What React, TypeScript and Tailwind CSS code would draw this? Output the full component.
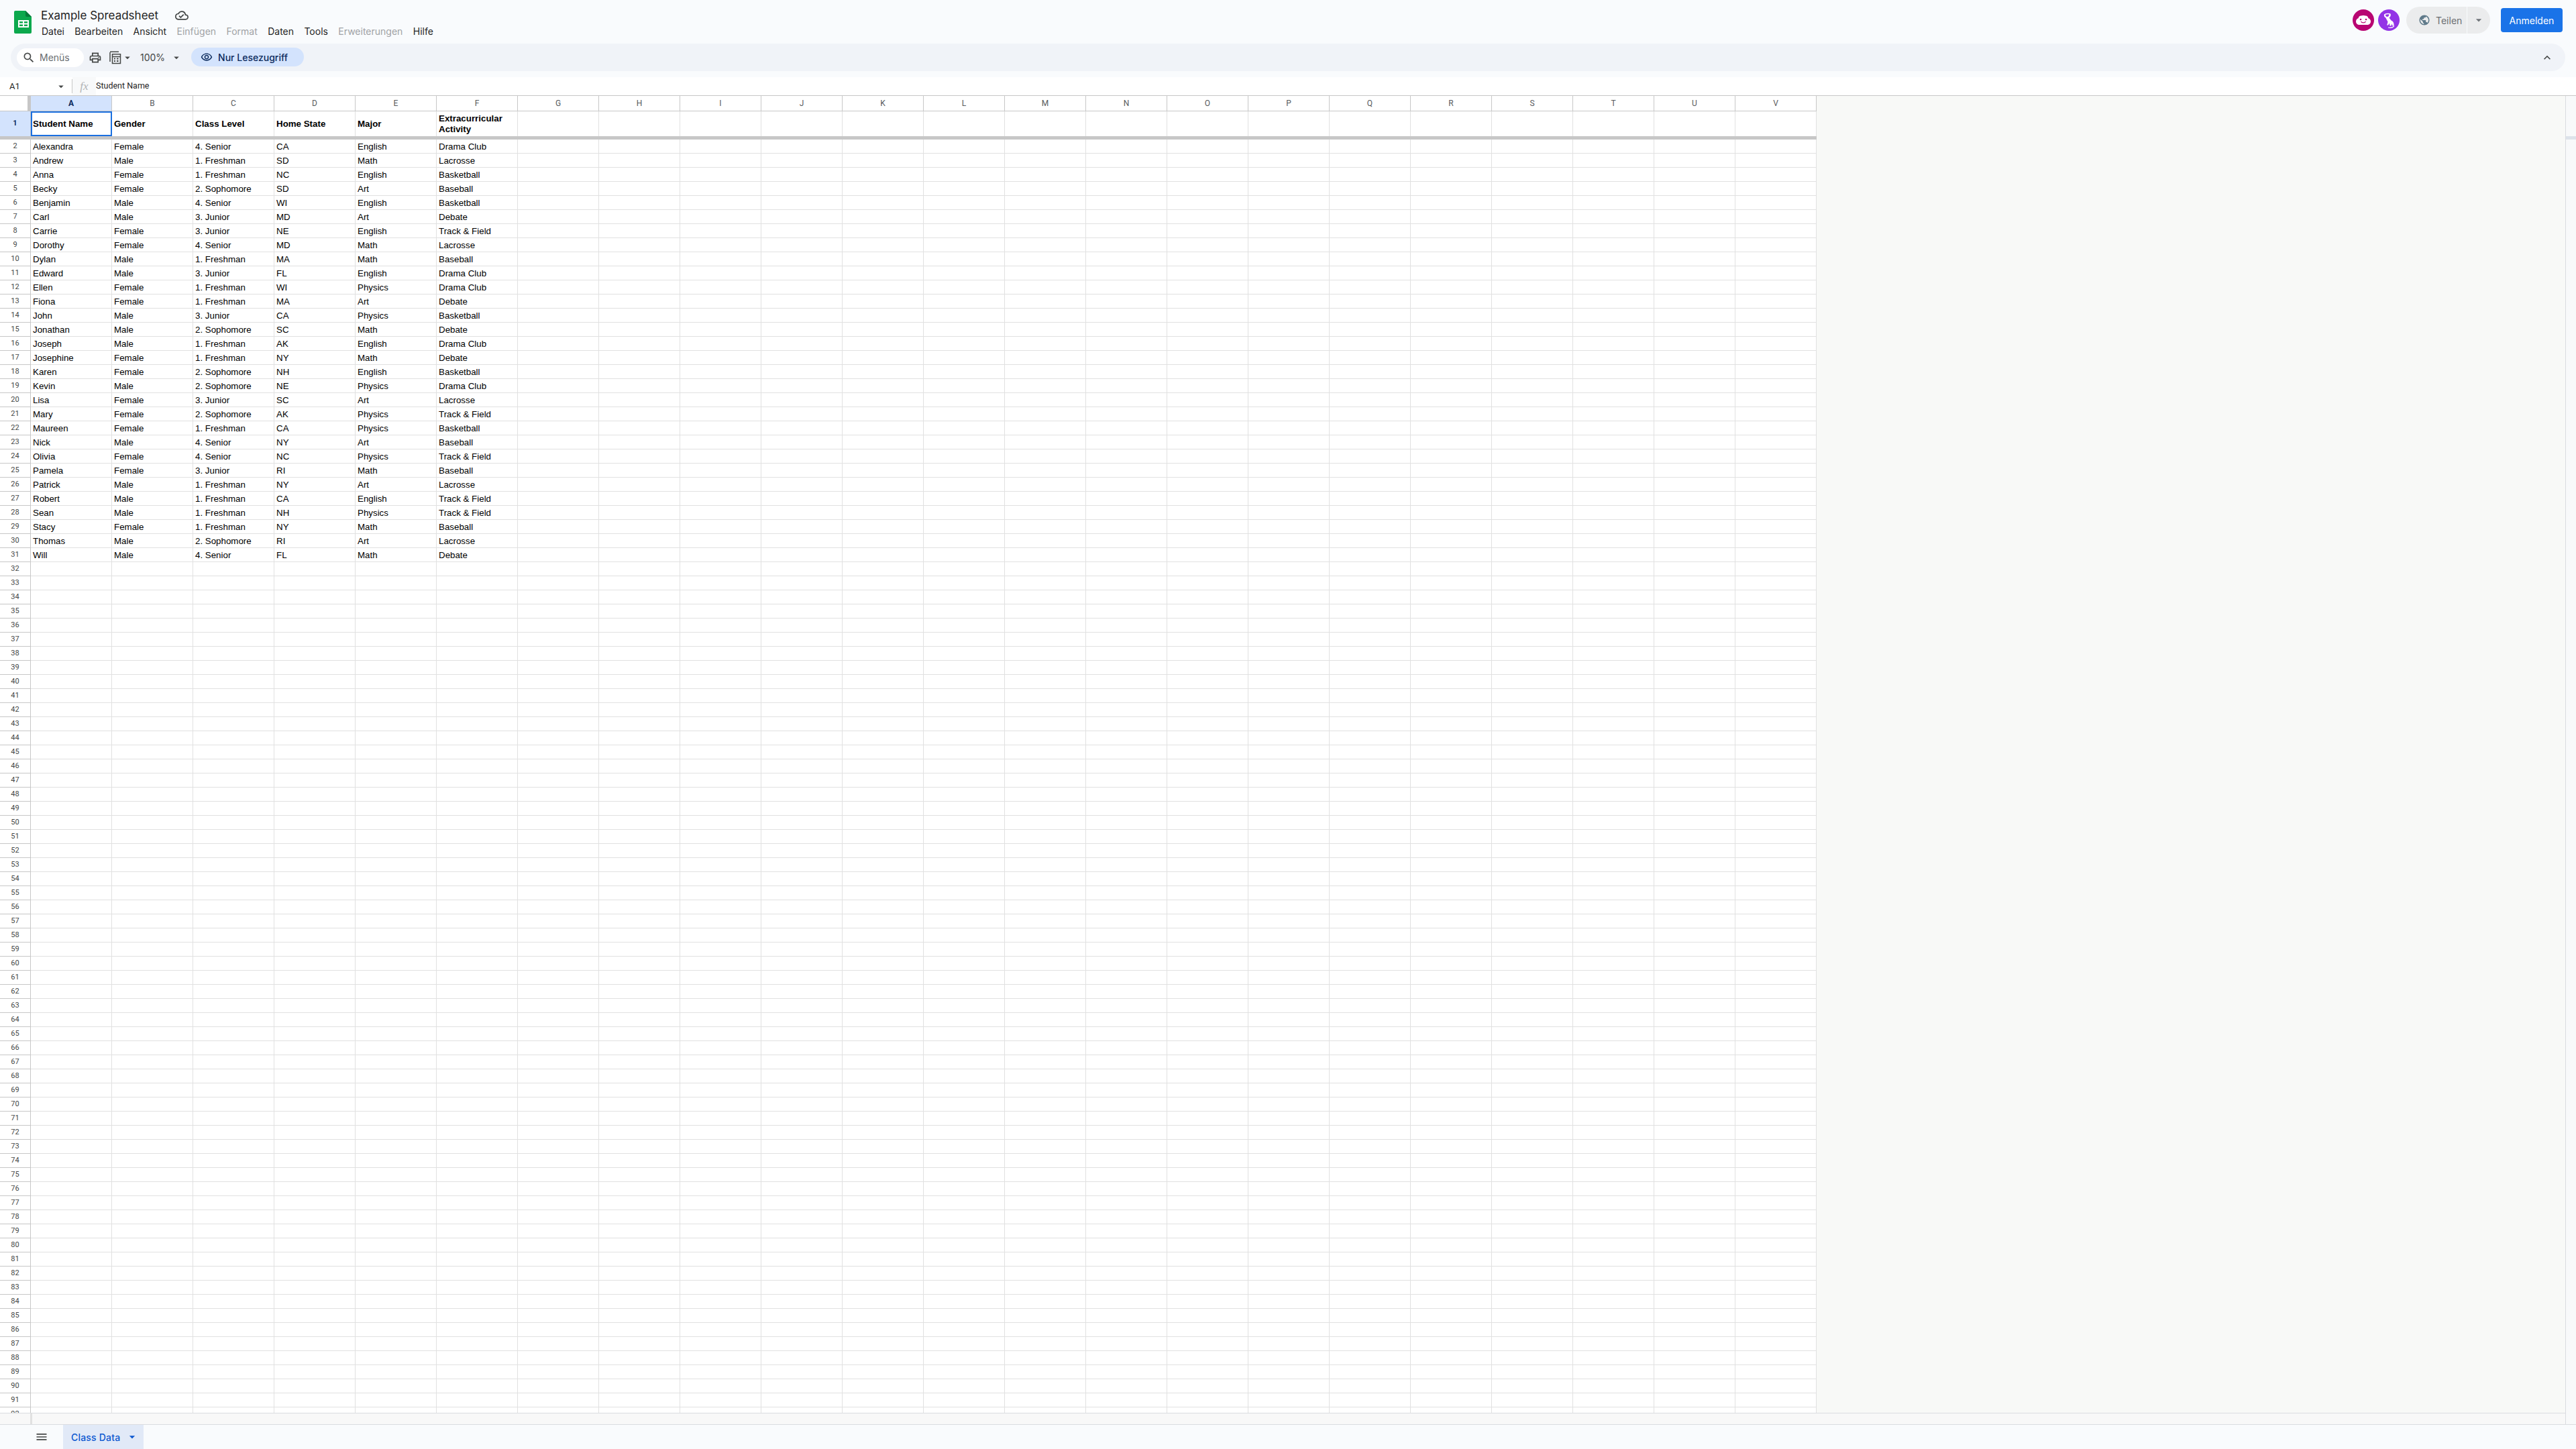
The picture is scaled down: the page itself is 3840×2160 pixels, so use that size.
import React from "react";
import { MdSearch, MdOutlinePrint, MdArrowDropDown, MdOutlineRemoveRedEye, MdPublic, MdKeyboardArrowUp, MdMenu, MdOutlineCloudDone } from "react-icons/md";

const DATA = `Alexandra|Female|4. Senior|CA|English|Drama Club
Andrew|Male|1. Freshman|SD|Math|Lacrosse
Anna|Female|1. Freshman|NC|English|Basketball
Becky|Female|2. Sophomore|SD|Art|Baseball
Benjamin|Male|4. Senior|WI|English|Basketball
Carl|Male|3. Junior|MD|Art|Debate
Carrie|Female|3. Junior|NE|English|Track & Field
Dorothy|Female|4. Senior|MD|Math|Lacrosse
Dylan|Male|1. Freshman|MA|Math|Baseball
Edward|Male|3. Junior|FL|English|Drama Club
Ellen|Female|1. Freshman|WI|Physics|Drama Club
Fiona|Female|1. Freshman|MA|Art|Debate
John|Male|3. Junior|CA|Physics|Basketball
Jonathan|Male|2. Sophomore|SC|Math|Debate
Joseph|Male|1. Freshman|AK|English|Drama Club
Josephine|Female|1. Freshman|NY|Math|Debate
Karen|Female|2. Sophomore|NH|English|Basketball
Kevin|Male|2. Sophomore|NE|Physics|Drama Club
Lisa|Female|3. Junior|SC|Art|Lacrosse
Mary|Female|2. Sophomore|AK|Physics|Track & Field
Maureen|Female|1. Freshman|CA|Physics|Basketball
Nick|Male|4. Senior|NY|Art|Baseball
Olivia|Female|4. Senior|NC|Physics|Track & Field
Pamela|Female|3. Junior|RI|Math|Baseball
Patrick|Male|1. Freshman|NY|Art|Lacrosse
Robert|Male|1. Freshman|CA|English|Track & Field
Sean|Male|1. Freshman|NH|Physics|Track & Field
Stacy|Female|1. Freshman|NY|Math|Baseball
Thomas|Male|2. Sophomore|RI|Art|Lacrosse
Will|Male|4. Senior|FL|Math|Debate`.split("\n").map((l) => l.split("|"));

const COLS = "ABCDEFGHIJKLMNOPQRSTUV".split("");
const HEAD = ["Student Name", "Gender", "Class Level", "Home State", "Major", "Extracurricular Activity"];
const MENUS: [string, boolean][] = [["Datei", false], ["Bearbeiten", false], ["Ansicht", false], ["Einfügen", true], ["Format", true], ["Daten", false], ["Tools", false], ["Erweiterungen", true], ["Hilfe", false]];

function SheetsLogo() {
  return (
    <svg width="26" height="34" viewBox="0 0 26 34" className="shrink-0">
      <path d="M2 0H17L26 9V32a2 2 0 0 1-2 2H2a2 2 0 0 1-2-2V2a2 2 0 0 1 2-2z" fill="#0ca84d" />
      <path d="M17 0L26 9H19a2 2 0 0 1-2-2z" fill="#07793a" />
      <path d="M6 14H22V25H6z" fill="#fff" />
      <path d="M8 16H13V18.5H8zM15 16H20V18.5H15zM8 20.5H13V23H8zM15 20.5H20V23H15z" fill="#0ca84d" />
    </svg>
  );
}

function CalcIcon() {
  return (
    <svg width="18" height="20" viewBox="0 0 18 20" fill="none" stroke="#444746" strokeWidth="1.5">
      <path d="M1 2V16" />
      <path d="M4.5 4.7H16.5V18.5H4.5Z" />
      <path d="M1 1.2H14" />
      <path d="M4.5 8.5H16.5" />
      <path d="M7 11.5h2M11 11.5h2.5M7 15h2M11 15h2.5" strokeWidth="2" />
    </svg>
  );
}

function Avatar1() {
  return (
    <svg width="32" height="32" viewBox="0 0 32 32" className="shrink-0">
      <circle cx="16" cy="16" r="16" fill="#b80672" />
      <path d="M10 23c-3 0-5-2.300-5-5 0-2.500 1.500-4.300 3.500-4.800C9 10.500 11 9 13 9.500c1-.8 5-.8 6 0 2-.5 4 1 4.500 3.700 2 .5 3.500 2.300 3.500 4.800 0 2.700-2 5-5 5z" fill="#fff" />
      <circle cx="12" cy="15" r="1.300" fill="#b80672" />
      <circle cx="20" cy="15" r="1.300" fill="#b80672" />
      <path d="M12.500 18c1.500 2.500 5.500 2.500 7 0" stroke="#b80672" strokeWidth="1.300" fill="none" />
    </svg>
  );
}

function Avatar2() {
  return (
    <svg width="32" height="32" viewBox="0 0 32 32" className="shrink-0">
      <circle cx="16" cy="16" r="16" fill="#9334e6" />
      <path d="M9 7.500c2-2 7-2.500 9.500-1 1 2.500-.5 5-2 6l3 4c2 .5 4 3 4 6 .5 1.500-.5 2.500-2 2l-1-3-1 3h-2l-.5-4-2 3h-1.800l1.300-5-3.500-6.500C9.500 12 8.500 10 9 7.500z" fill="#fff" />
      <path d="M11 8c1.500-1 4-1 5.500-.5 0 1.800-1.500 3.500-3 3.500S11 10 11 8z" fill="#9334e6" />
      <path d="M15 27c3 .8 7 .2 9-2.500" stroke="#fff" strokeWidth="1.200" fill="none" />
    </svg>
  );
}

function Cell({ children, bold = false, selected = false, h = "row" }: { children?: React.ReactNode; bold?: boolean; selected?: boolean; h?: string }) {
  return (
    <div
      className={
        "box-border w-[121px] shrink-0 flex items-center overflow-hidden font-['Liberation_Sans',Arial,sans-serif] text-[13.33px] text-black " +
        (selected ? "border-2 border-[#1a6fe0] pl-[1px] pr-[1px] " : "border-r border-[#e1e1e1] pl-[3px] pr-[2px] ") +
        (h === "row" ? "h-[21px] border-b whitespace-nowrap leading-[21px] " : "h-[37px] leading-[16px] ") +
        (bold ? "font-bold" : "")
      }
    >
      {children}
    </div>
  );
}

function RowNum({ n, active = false, tall = false }: { n: number; active?: boolean; tall?: boolean }) {
  return (
    <div
      className={
        "box-border w-[46px] shrink-0 flex items-center justify-center border-r border-[#c7c7c7] font-['Roboto',Arial,sans-serif] text-[11px] " +
        (tall ? "h-[37px] " : "h-[21px] border-b ") +
        (active ? "bg-[#d3e3fd] text-[#0b2a5c] font-bold" : "bg-white text-[#444746]")
      }
    >
      {n}
    </div>
  );
}

export default function App() {
  const empties = Array.from({ length: 61 }, (_, i) => i + 32);
  return (
    <div className="w-[3840px] h-[2160px] flex flex-col overflow-hidden bg-[#f9fbfd] font-['Inter',sans-serif] text-[#1f1f1f]">
      {/* Title bar */}
      <div className="h-[65px] shrink-0 flex items-start">
        <div className="ml-[21px] mt-[16px]"><SheetsLogo /></div>
        <div className="ml-[14px] flex flex-col">
          <div className="mt-[10px] h-[26px] flex items-center">
            <span className="text-[17px] leading-[26px] text-[#1f1f1f]">Example Spreadsheet</span>
            <MdOutlineCloudDone className="ml-[25px] text-[#444746]" size={20} />
          </div>
          <div className="mt-[1px] ml-[1px] h-[20px] flex items-center gap-[15.4px] text-[14px] leading-[20px]">
            {MENUS.map(([m, off]) => (
              <span key={m} className={off ? "text-[#a0a2a5]" : "text-[#1f1f1f]"}>{m}</span>
            ))}
          </div>
        </div>
        <div className="ml-auto mt-[10px] flex items-start">
          <div className="mt-[4px]"><Avatar1 /></div>
          <div className="mt-[4px] ml-[6px]"><Avatar2 /></div>
          <div className="ml-[10px] w-[125px] h-[40px] rounded-full bg-[#ebeced] flex items-center overflow-hidden">
            <div className="w-[91px] h-[40px] flex items-center pl-[18px] border-r border-[#f9fbfd]">
              <MdPublic size={18} className="text-[#5f7a8a]" />
              <span className="ml-[8px] text-[14px] text-[#6b6e72]">Teilen</span>
            </div>
            <MdArrowDropDown size={20} className="ml-[7px] text-[#70757a]" />
          </div>
          <div className="ml-[16px] mt-[2px] mr-[20px] w-[92px] h-[36px] rounded-[4px] bg-[#1a73e8] flex items-center justify-center text-[14px] text-white">Anmelden</div>
        </div>
      </div>

      {/* Toolbar */}
      <div className="mx-[16px] h-[41px] shrink-0 rounded-full bg-[#f0f3f8] flex items-center pl-[9px] pr-[17px]">
        <div className="w-[100px] h-[28px] rounded-full bg-white flex items-center pl-[8px]">
          <MdSearch size={20} className="text-[#444746]" />
          <span className="ml-[6px] text-[14px] text-[#6a6d70]">Menüs</span>
        </div>
        <MdOutlinePrint size={20} className="ml-[7px] text-[#444746]" />
        <div className="ml-[11px]"><CalcIcon /></div>
        <MdArrowDropDown size={18} className="text-[#444746]" />
        <span className="ml-[10px] text-[14px] text-[#444746]">100%</span>
        <MdArrowDropDown size={18} className="ml-[8px] text-[#444746]" />
        <div className="ml-[13px] w-[168px] h-[28px] rounded-full bg-[#d3e3fd] flex items-center pl-[14px] mb-[1px]">
          <MdOutlineRemoveRedEye size={18} className="text-[#0b2a5c]" />
          <span className="ml-[8px] text-[14px] font-medium text-[#0b2a5c]">Nur Lesezugriff</span>
        </div>
        <MdKeyboardArrowUp size={20} className="ml-auto text-[#444746]" />
      </div>

      <div className="h-[9px] shrink-0" />

      {/* Formula bar */}
      <div className="h-[27px] shrink-0 bg-white flex items-center font-['Roboto',sans-serif] text-[13px] text-[#1f1f1f]">
        <span className="ml-[14px] w-[68px]">A1</span>
        <MdArrowDropDown size={18} className="text-[#444746]" />
        <div className="ml-[7px] w-px h-[21px] bg-[#c7c7c7]" />
        <div className="w-[35px] h-[27px] bg-[#f8f9fa] flex items-center justify-center">
          <span className="font-['Liberation_Serif',serif] italic text-[17px] text-[#b0b3b5]">fx</span>
        </div>
        <span className="text-[12.5px]">Student Name</span>
      </div>

      {/* Sheet body */}
      <div className="h-[1981px] shrink-0 flex border-t border-[#c7c7c7] bg-[#f8f9f7]">
        <div className="flex-1 min-w-0 flex flex-col">
          <div className="flex-1 min-h-0 flex overflow-hidden">
            <div className="w-[2708px] shrink-0 bg-white flex flex-col">
              {/* Column header */}
              <div className="flex h-[23px] shrink-0 border-b border-[#c7c7c7]">
                <div className="w-[46px] shrink-0 flex justify-end"><div className="w-[5px] bg-[#c7c7c7]" /></div>
                {COLS.map((c, i) => (
                  <div key={c} className={"box-border w-[121px] shrink-0 flex items-center justify-center border-r border-[#c7c7c7] font-['Roboto',sans-serif] text-[12px] " + (i === 0 ? "bg-[#d3e3fd] font-bold text-[#0b2a5c]" : "text-[#575a5c]")}>{c}</div>
                ))}
              </div>
              {/* Row 1 */}
              <div className="flex h-[42px] shrink-0 border-b-[5px] border-[#c7c7c7]">
                <RowNum n={1} active tall />
                {COLS.map((c, i) => (
                  <Cell key={c} h="head" bold selected={i === 0}>{HEAD[i]}</Cell>
                ))}
              </div>
              {DATA.map((row, r) => (
                <div key={r} className="flex shrink-0">
                  <RowNum n={r + 2} />
                  {COLS.map((c, i) => (
                    <Cell key={c}>{row[i]}</Cell>
                  ))}
                </div>
              ))}
              {empties.map((n) => (
                <div key={n} className="flex shrink-0">
                  <RowNum n={n} />
                  {COLS.map((c) => (
                    <Cell key={c} />
                  ))}
                </div>
              ))}
            </div>
            <div className="flex-1" />
          </div>
          {/* Horizontal scrollbar */}
          <div className="h-[17px] shrink-0 flex border-t border-[#dadce0] bg-[#f8f8f8]">
            <div className="w-[45px] shrink-0" />
            <div className="w-[3px] bg-[#e1e1e1]" />
          </div>
        </div>
        {/* Vertical scrollbar */}
        <div className="w-[16px] shrink-0 flex flex-col border-l border-[#dadce0] bg-[#f8f9fa]">
          <div className="h-[60px] shrink-0" />
          <div className="h-[5px] shrink-0 bg-[#dde3ea]" />
        </div>
      </div>

      {/* Tab bar */}
      <div className="flex-1 min-h-0 flex items-stretch border-t border-[#dadce0] bg-[#f9fbfd]">
        <div className="ml-[52px] w-[42px] flex items-center"><MdMenu size={20} className="text-[#444746]" /></div>
        <div className="w-[120px] bg-[#e1e9f7] flex items-center pl-[12px]">
          <span className="text-[14px] tracking-[0.2px] font-medium text-[#0b57d0]">Class Data</span>
          <MdArrowDropDown size={20} className="ml-[8px] text-[#0b57d0]" />
        </div>
      </div>
    </div>
  );
}
